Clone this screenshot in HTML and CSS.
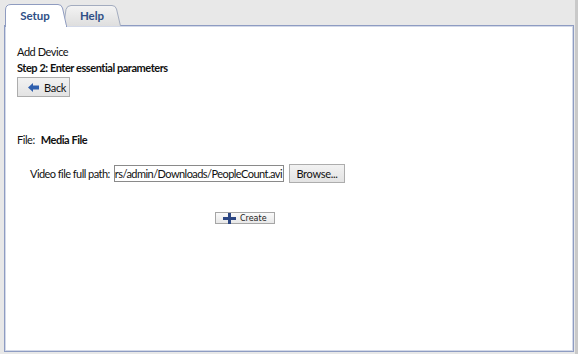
FILE: index.html
```html
<!DOCTYPE html>
<html>
<head>
<meta charset="utf-8">
<link rel="stylesheet" href="styles.css">
</head>
<body>
<div class="frame">
  <div class="tabs">
    <svg class="tab-shapes" width="125" height="23" viewBox="0 0 125 23">
      <defs>
        <linearGradient id="hg" x1="0" y1="0" x2="0" y2="1">
          <stop offset="0" stop-color="#f4f4f4"/>
          <stop offset="1" stop-color="#dedede"/>
        </linearGradient>
      </defs>
      <path d="M58.5,22 L61,5.5 Q62,1.5 66,1.5 L107,1.5 Q110.5,1.5 111.5,5 L115.5,22" fill="url(#hg)" stroke="#a3acbf" stroke-width="1"/>
      <path d="M0.5,23 L0.5,6 Q0.5,0.5 6,0.5 L53,0.5 Q56.5,0.5 57.5,4 L61.5,22 L61.5,23 Z" fill="#ffffff" stroke="#8f9cc0" stroke-width="1"/>
      <rect x="1" y="21" width="60" height="2" fill="#ffffff"/>
    </svg>
    <div class="tab tab-active">Setup</div>
    <div class="tab tab-help">Help</div>
  </div>
  <div class="panel">
    <div class="line">Add Device</div>
    <div class="line bold">Step 2: Enter essential parameters</div>
    <button class="btn back-btn">
      <svg width="11" height="9" viewBox="0 0 11 9">
        <path d="M0,4.5 L5,0 L5,2.5 L11,2.5 L11,6.5 L5,6.5 L5,9 Z" fill="#2f5fae"/>
      </svg>
      <span>Back</span>
    </button>
    <div class="file-row"><span>File:</span><span class="bold">Media File</span></div>
    <div class="path-row">
      <span class="path-label">Video file full path:</span>
      <div class="path-input"><span>C:/Users/admin/Downloads/PeopleCount.avi</span></div>
      <button class="btn browse-btn">Browse...</button>
    </div>
    <div class="create-row">
      <button class="create-btn">
        <svg width="13" height="11" viewBox="0 0 13 11">
          <rect x="5" y="0" width="3" height="11" fill="#2b4683"/>
          <rect x="0" y="4" width="13" height="3" fill="#2b4683"/>
        </svg>
        <span>Create</span>
      </button>
    </div>
  </div>
</div>
</body>
</html>
```
FILE: styles.css
```css
html, body {
  margin: 0;
  padding: 0;
}
body {
  width: 578px;
  height: 354px;
  background: #e8e8e8;
  font-family: Lato, "Liberation Sans", sans-serif;
  font-size: 11px;
  letter-spacing: -0.45px;
  color: #111;
  overflow: hidden;
}
.frame {
  width: 575px;
  height: 354px;
  border-right: 3px solid #c9c9c9;
  display: flex;
  flex-direction: column;
}
.tabs {
  position: relative;
  height: 21px;
  margin-top: 4px;
  padding-left: 5px;
  display: flex;
  z-index: 2;
}
.tab-shapes {
  position: absolute;
  left: 5px;
  top: 0;
}
.tab {
  position: relative;
  font-weight: bold;
  color: #2f4f86;
  font-size: 11.5px;
  letter-spacing: 0;
  line-height: 23px;
  text-align: center;
}
.tab-active {
  width: 60px;
}
.tab-help {
  width: 54px;
}
.panel {
  margin-left: 4px;
  background: #fff;
  border: 1px solid #8e9cc2;
  box-shadow: inset 0 0 0 1px #d3d9e8;
  padding: 18px 0 0 12px;
  box-sizing: border-box;
  height: 327px;
  width: 570px;
}
.line {
  line-height: 16px;
  height: 16px;
}
.bold {
  font-weight: bold;
}
.btn {
  font-family: inherit;
  font-size: 11px;
  letter-spacing: -0.3px;
  color: #111;
  background: linear-gradient(#f2f2f2, #e3e3e3);
  border: 1px solid #adadad;
  border-radius: 0;
  padding: 0;
  display: flex;
  align-items: center;
  box-sizing: border-box;
}
.back-btn {
  margin-top: 1px;
  width: 53px;
  height: 20px;
  padding-left: 10px;
  gap: 5px;
}
.file-row {
  margin-top: 36px;
  display: flex;
  gap: 6px;
  line-height: 14px;
}
.path-row {
  margin-top: 17px;
  margin-left: 13px;
  display: flex;
  align-items: center;
  white-space: nowrap;
}
.path-label {
  width: 84px;
  flex-shrink: 0;
  letter-spacing: -0.55px;
}
.path-input {
  width: 170px;
  height: 17px;
  box-sizing: border-box;
  border: 1px solid #8a8a8a;
  display: flex;
  justify-content: flex-end;
  overflow: hidden;
  white-space: nowrap;
  line-height: 15px;
  padding-right: 1px;
  letter-spacing: -0.55px;
}
.browse-btn {
  margin-left: 5px;
  width: 56px;
  height: 19px;
  justify-content: center;
}
.create-row {
  margin-top: 29px;
  padding-left: 198px;
}
.create-btn {
  width: 60px;
  height: 12px;
  box-sizing: border-box;
  border: 1px solid #a6a6a6;
  background: linear-gradient(#fafafa, #e8e8e8);
  padding: 0 0 0 7px;
  display: flex;
  align-items: center;
  gap: 4px;
  font-family: "DejaVu Sans", sans-serif;
  font-size: 8px;
  letter-spacing: 0;
  color: #222;
  overflow: visible;
}
```
